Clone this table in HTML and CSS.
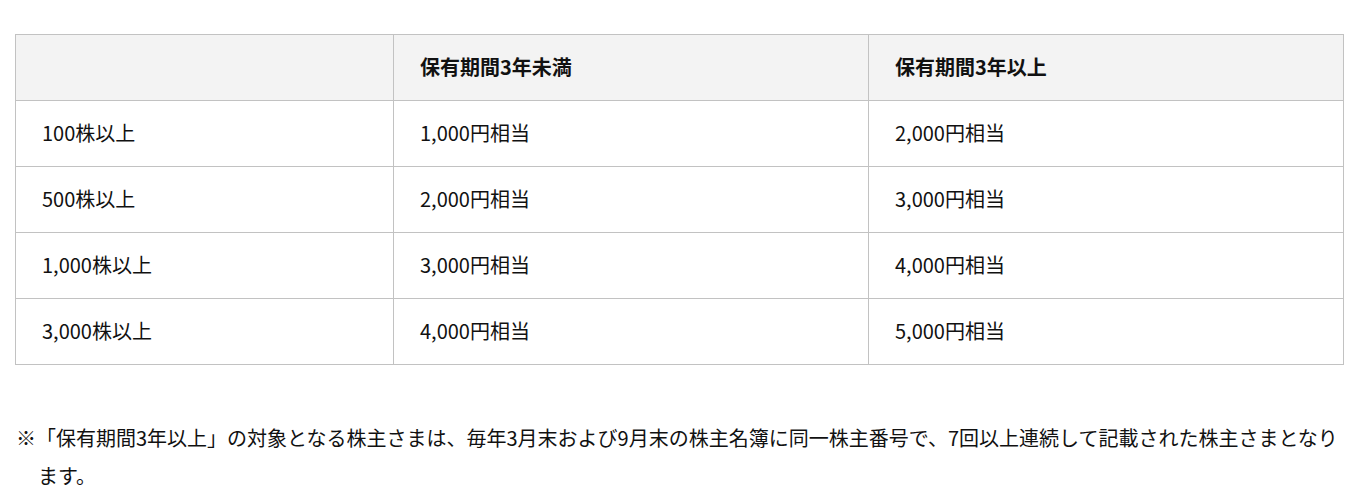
FILE: index.html
```html
<!DOCTYPE html>
<html lang="ja">
<head>
<meta charset="utf-8">
<title>株主優待</title>
<link rel="stylesheet" href="styles.css">
</head>
<body>
<main class="page">
  <table class="benefit-table">
    <colgroup>
      <col class="col-shares">
      <col class="col-period">
      <col class="col-period">
    </colgroup>
    <thead>
      <tr>
        <th></th>
        <th>保有期間3年未満</th>
        <th>保有期間3年以上</th>
      </tr>
    </thead>
    <tbody>
      <tr><td>100株以上</td><td>1,000円相当</td><td>2,000円相当</td></tr>
      <tr><td>500株以上</td><td>2,000円相当</td><td>3,000円相当</td></tr>
      <tr><td>1,000株以上</td><td>3,000円相当</td><td>4,000円相当</td></tr>
      <tr><td>3,000株以上</td><td>4,000円相当</td><td>5,000円相当</td></tr>
    </tbody>
  </table>
  <p class="note">※「保有期間3年以上」の対象となる株主さまは、毎年3月末および9月末の株主名簿に同一株主番号で、7回以上連続して記載された株主さまとなります。</p>
</main>
</body>
</html>
```

FILE: styles.css
```css
html, body {
  margin: 0;
  padding: 0;
  background: #ffffff;
}

body {
  font-family: "Noto Sans CJK JP", "Noto Sans", sans-serif;
  font-size: 20px;
  color: #111111;
}

.page {
  padding: 34px 16px 0 15px;
}

.benefit-table {
  width: 1328px;
  border-collapse: collapse;
  table-layout: fixed;
}

.col-shares {
  width: 378px;
}

.col-period {
  width: 475px;
}

.benefit-table th,
.benefit-table td {
  border: 1px solid #c2c2c2;
  padding: 16px 26px 17px;
  line-height: 32px;
  text-align: left;
  vertical-align: middle;
}

.benefit-table th {
  background: #f3f3f3;
  font-weight: 700;
}

.benefit-table td {
  font-weight: 400;
}

.note {
  margin: 54px 0 0 1px;
  padding-left: 22px;
  text-indent: -22px;
  line-height: 38px;
}
```
